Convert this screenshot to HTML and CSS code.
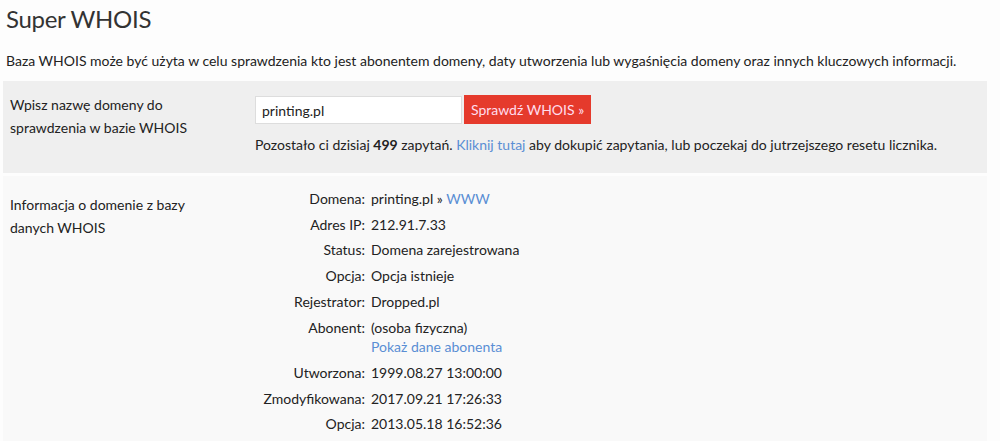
FILE: index.html
```html
<!DOCTYPE html>
<html lang="pl">
<head>
<meta charset="UTF-8">
<title>Super WHOIS</title>
<link rel="stylesheet" href="styles.css">
</head>
<body>
<div class="wrap">
  <h1>Super WHOIS</h1>
  <p class="intro">Baza WHOIS może być użyta w celu sprawdzenia kto jest abonentem domeny, daty utworzenia lub wygaśnięcia domeny oraz innych kluczowych informacji.</p>

  <div class="box search">
    <div class="side">Wpisz nazwę domeny do sprawdzenia w bazie WHOIS</div>
    <div class="main">
      <form class="form">
        <input type="text" class="domain" value="printing.pl">
        <button type="button" class="check">Sprawdź WHOIS »</button>
      </form>
      <p class="left">Pozostało ci dzisiaj <b>499</b> zapytań. <a href="#">Kliknij tutaj</a> aby dokupić zapytania, lub poczekaj do jutrzejszego resetu licznika.</p>
    </div>
  </div>

  <div class="box result">
    <div class="side">Informacja o domenie z bazy danych WHOIS</div>
    <div class="main">
      <dl class="info">
        <dt>Domena:</dt><dd>printing.pl » <a href="#">WWW</a></dd>
        <dt>Adres IP:</dt><dd>212.91.7.33</dd>
        <dt>Status:</dt><dd>Domena zarejestrowana</dd>
        <dt>Opcja:</dt><dd>Opcja istnieje</dd>
        <dt>Rejestrator:</dt><dd>Dropped.pl</dd>
        <dt>Abonent:</dt><dd>(osoba fizyczna)<br><a href="#">Pokaż dane abonenta</a></dd>
        <dt>Utworzona:</dt><dd>1999.08.27 13:00:00</dd>
        <dt>Zmodyfikowana:</dt><dd>2017.09.21 17:26:33</dd>
        <dt>Opcja:</dt><dd>2013.05.18 16:52:36</dd>
      </dl>
    </div>
  </div>
</div>
</body>
</html>
```

FILE: styles.css
```css
body { margin: 0; background: #fdfdfd; color: #222; font-family: Lato, "Noto Sans", sans-serif; font-size: 14px; }
a { color: #5a8ed4; text-decoration: none; }
.wrap { padding: 0 13px 0 3px; }
h1 { font-size: 24px; font-weight: normal; color: #333; margin: 0; padding: 1px 0 0 3px; line-height: 36px; letter-spacing: -0.3px; }
.intro { margin: 13px 0 0; padding-left: 3px; line-height: 22px; }
.box { display: grid; grid-template-columns: 252px 1fr; }
.side { padding-left: 7px; width: 200px; line-height: 23px; }
.search { background: #efefef; margin-top: 9px; padding: 12px 0 17px; }
.form { display: flex; margin: 0; padding-top: 3px; }
.domain { width: 207px; height: 28px; box-sizing: border-box; border: 1px solid #ddd; background: #fff; padding: 0 6px; font: inherit; color: #222; outline: none; }
.check { height: 29px; margin: -1px 0 0 2px; border: 0; background: #e53a2c; color: #fde; font: inherit; padding: 0 7px; cursor: pointer; }
.left { margin: 10px 0 0; line-height: 22px; }
.result { background: #f9f9f9; margin-top: 3px; padding: 17px 0 10px; }
.info { display: grid; grid-template-columns: 110px 1fr; column-gap: 6px; margin: -7px 0 0; }
.info dt { text-align: right; padding: 3px 0; line-height: 19.7px; white-space: nowrap; }
.info dd { margin: 0; padding: 3px 0; line-height: 19.7px; }
```
